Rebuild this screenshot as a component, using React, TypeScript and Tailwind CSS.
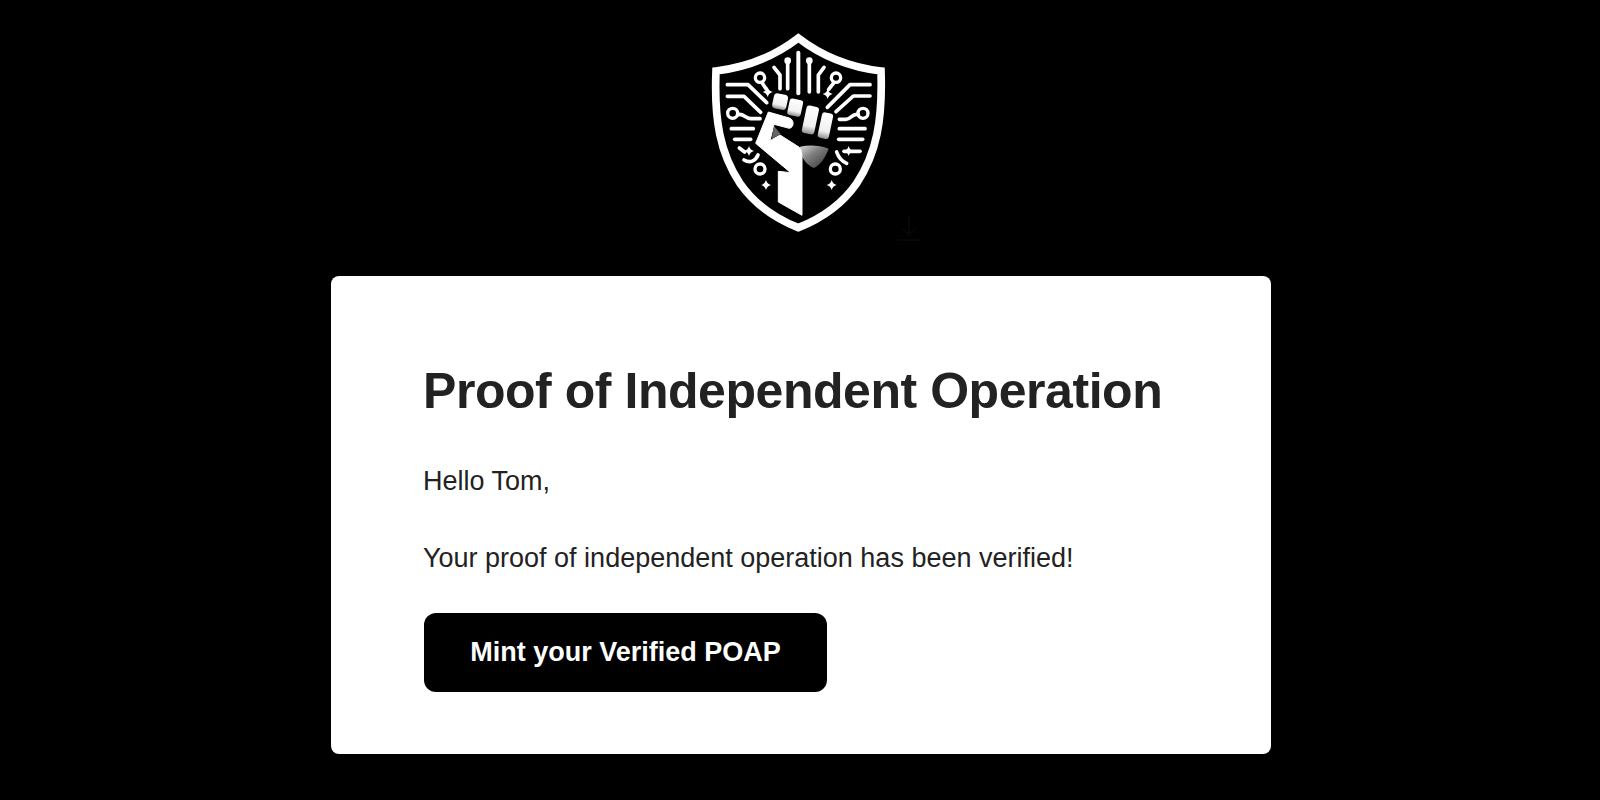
import React from 'react';

const Sparkle = ({ x, y, r = 15 }: { x: number; y: number; r?: number }) => (
  <path
    d={`M${x} ${y - r} Q${x + 3} ${y - 3} ${x + r} ${y} Q${x + 3} ${y + 3} ${x} ${y + r} Q${x - 3} ${y + 3} ${x - r} ${y} Q${x - 3} ${y - 3} ${x} ${y - r}Z`}
    fill="#fff"
  />
);

const Logo = () => (
  <svg viewBox="0 0 660 690" className="block w-[220px] h-[230px] mx-auto overflow-visible" fill="none">
    <defs>
      <linearGradient id="knuckle" x1="0" y1="0" x2="1" y2="1">
        <stop offset="0" stopColor="#d8d8d8" />
        <stop offset="0.4" stopColor="#808080" />
        <stop offset="1" stopColor="#333333" />
      </linearGradient>
      <linearGradient id="finger" x1="0" y1="0" x2="0" y2="1">
        <stop offset="0" stopColor="#fff" />
        <stop offset="0.72" stopColor="#f0f0f0" />
        <stop offset="1" stopColor="#8f8f8f" />
      </linearGradient>
    </defs>
    {/* shield */}
    <path
      d="M325 54 C395 108 480 142 573 153 C578 300 560 400 500 490 C455 555 395 595 325 623 C255 595 195 555 150 490 C90 400 72 300 78 153 C170 142 255 108 325 54Z"
      stroke="#fff"
      strokeWidth="23"
      strokeLinejoin="miter"
    />
    {/* circuit lines, top */}
    <g stroke="#fff" strokeWidth="11" strokeLinecap="round" strokeLinejoin="round">
      <path d="M325 98V220" strokeWidth="12" />
      <path d="M293 125V206" />
      <path d="M358 125V216" />
      <path d="M252 142L270 165V206" />
      <path d="M402 142L385 165V216" />
      {/* left side */}
      <path d="M112 194H174L230 248" />
      <path d="M112 229H162L212 277" />
      <path d="M143 284C160 278 165 296 182 296H210" />
      <path d="M124 326H190" />
      <path d="M134 358H182" />
      <path d="M148 384L164 396" />
      <path d="M162 420C180 430 196 424 204 405" />
      <path d="M216 188L228 206" />
      {/* right side */}
      <path d="M540 194H480L412 262" />
      <path d="M540 228H490L438 275" />
      <path d="M505 284C488 278 484 298 468 298H448" />
      <path d="M448 326H525" />
      <path d="M446 358H518" />
      <path d="M462 394H510" />
      <path d="M440 396C446 414 456 424 470 430" />
      <path d="M432 188L416 208" />
    </g>
    <g stroke="#fff" strokeWidth="10">
      <circle cx="210" cy="173" r="14" />
      <circle cx="438" cy="173" r="14" />
      <circle cx="128" cy="280" r="15" />
      <circle cx="519" cy="280" r="15" />
      <circle cx="210" cy="447" r="15" />
      <circle cx="436" cy="447" r="15" />
    </g>
    <circle cx="293" cy="122" r="10" fill="#fff" />
    <circle cx="358" cy="122" r="10" fill="#fff" />
    <Sparkle x={233} y={216} />
    <Sparkle x={413} y={222} />
    <Sparkle x={177} y={393} />
    <Sparkle x={476} y={393} />
    <Sparkle x={228} y={495} />
    <Sparkle x={425} y={495} />
    {/* fist */}
    <path
      d="M330 380C360 374 390 376 416 386C406 412 394 432 372 444C352 436 340 420 332 402Z"
      fill="url(#knuckle)"
    />
    <path
      d="M235 276L298 294C312 298 314 322 298 325L252 313L240 362L270 345L328 382C336 392 336 404 336 420V586L265 546V454L302 458L197 370Z"
      fill="#fff"
      stroke="#fff"
      strokeWidth="3"
      strokeLinejoin="round"
    />
    <path d="M252 318L245 356L272 342Z" fill="#666" />
    <g fill="url(#finger)">
      <rect x="249" y="222" width="43" height="46" rx="11" transform="rotate(12 271 244)" />
      <rect x="295" y="238" width="41" height="50" rx="8" transform="rotate(12 316 263)" />
      <rect x="342" y="258" width="38" height="84" rx="9" transform="rotate(12 362 301)" />
      <rect x="389" y="278" width="34" height="78" rx="9" transform="rotate(12 406 318)" />
    </g>
    {/* faint mark beside the shield */}
    <path d="M657 590V640M637 625L657 645L677 625M622 660H692" stroke="#070707" strokeWidth="6" />
  </svg>
);

export default function App() {
  return (
    <div className="min-h-screen bg-black pt-5 font-['Liberation_Sans',Arial,sans-serif]">
      <Logo />
      <div className="w-[940px] h-[478px] ml-[331px] mt-[26px] bg-white rounded-lg pl-[92px] pr-[90px] pt-[85px] text-[#222222]">
        <h1 className="text-[50px] leading-[60px] font-bold tracking-[-0.45px] whitespace-nowrap">Proof of Independent Operation</h1>
        <p className="mt-[42px] text-[27px] leading-[36px]">Hello Tom,</p>
        <p className="mt-[41px] text-[27px] leading-[36px]">Your proof of independent operation has been verified!</p>
        <button className="block mt-[37px] ml-px w-[403px] h-[79px] bg-black text-white rounded-xl text-[27px] font-bold">
          Mint your Verified POAP
        </button>
      </div>
    </div>
  );
}
